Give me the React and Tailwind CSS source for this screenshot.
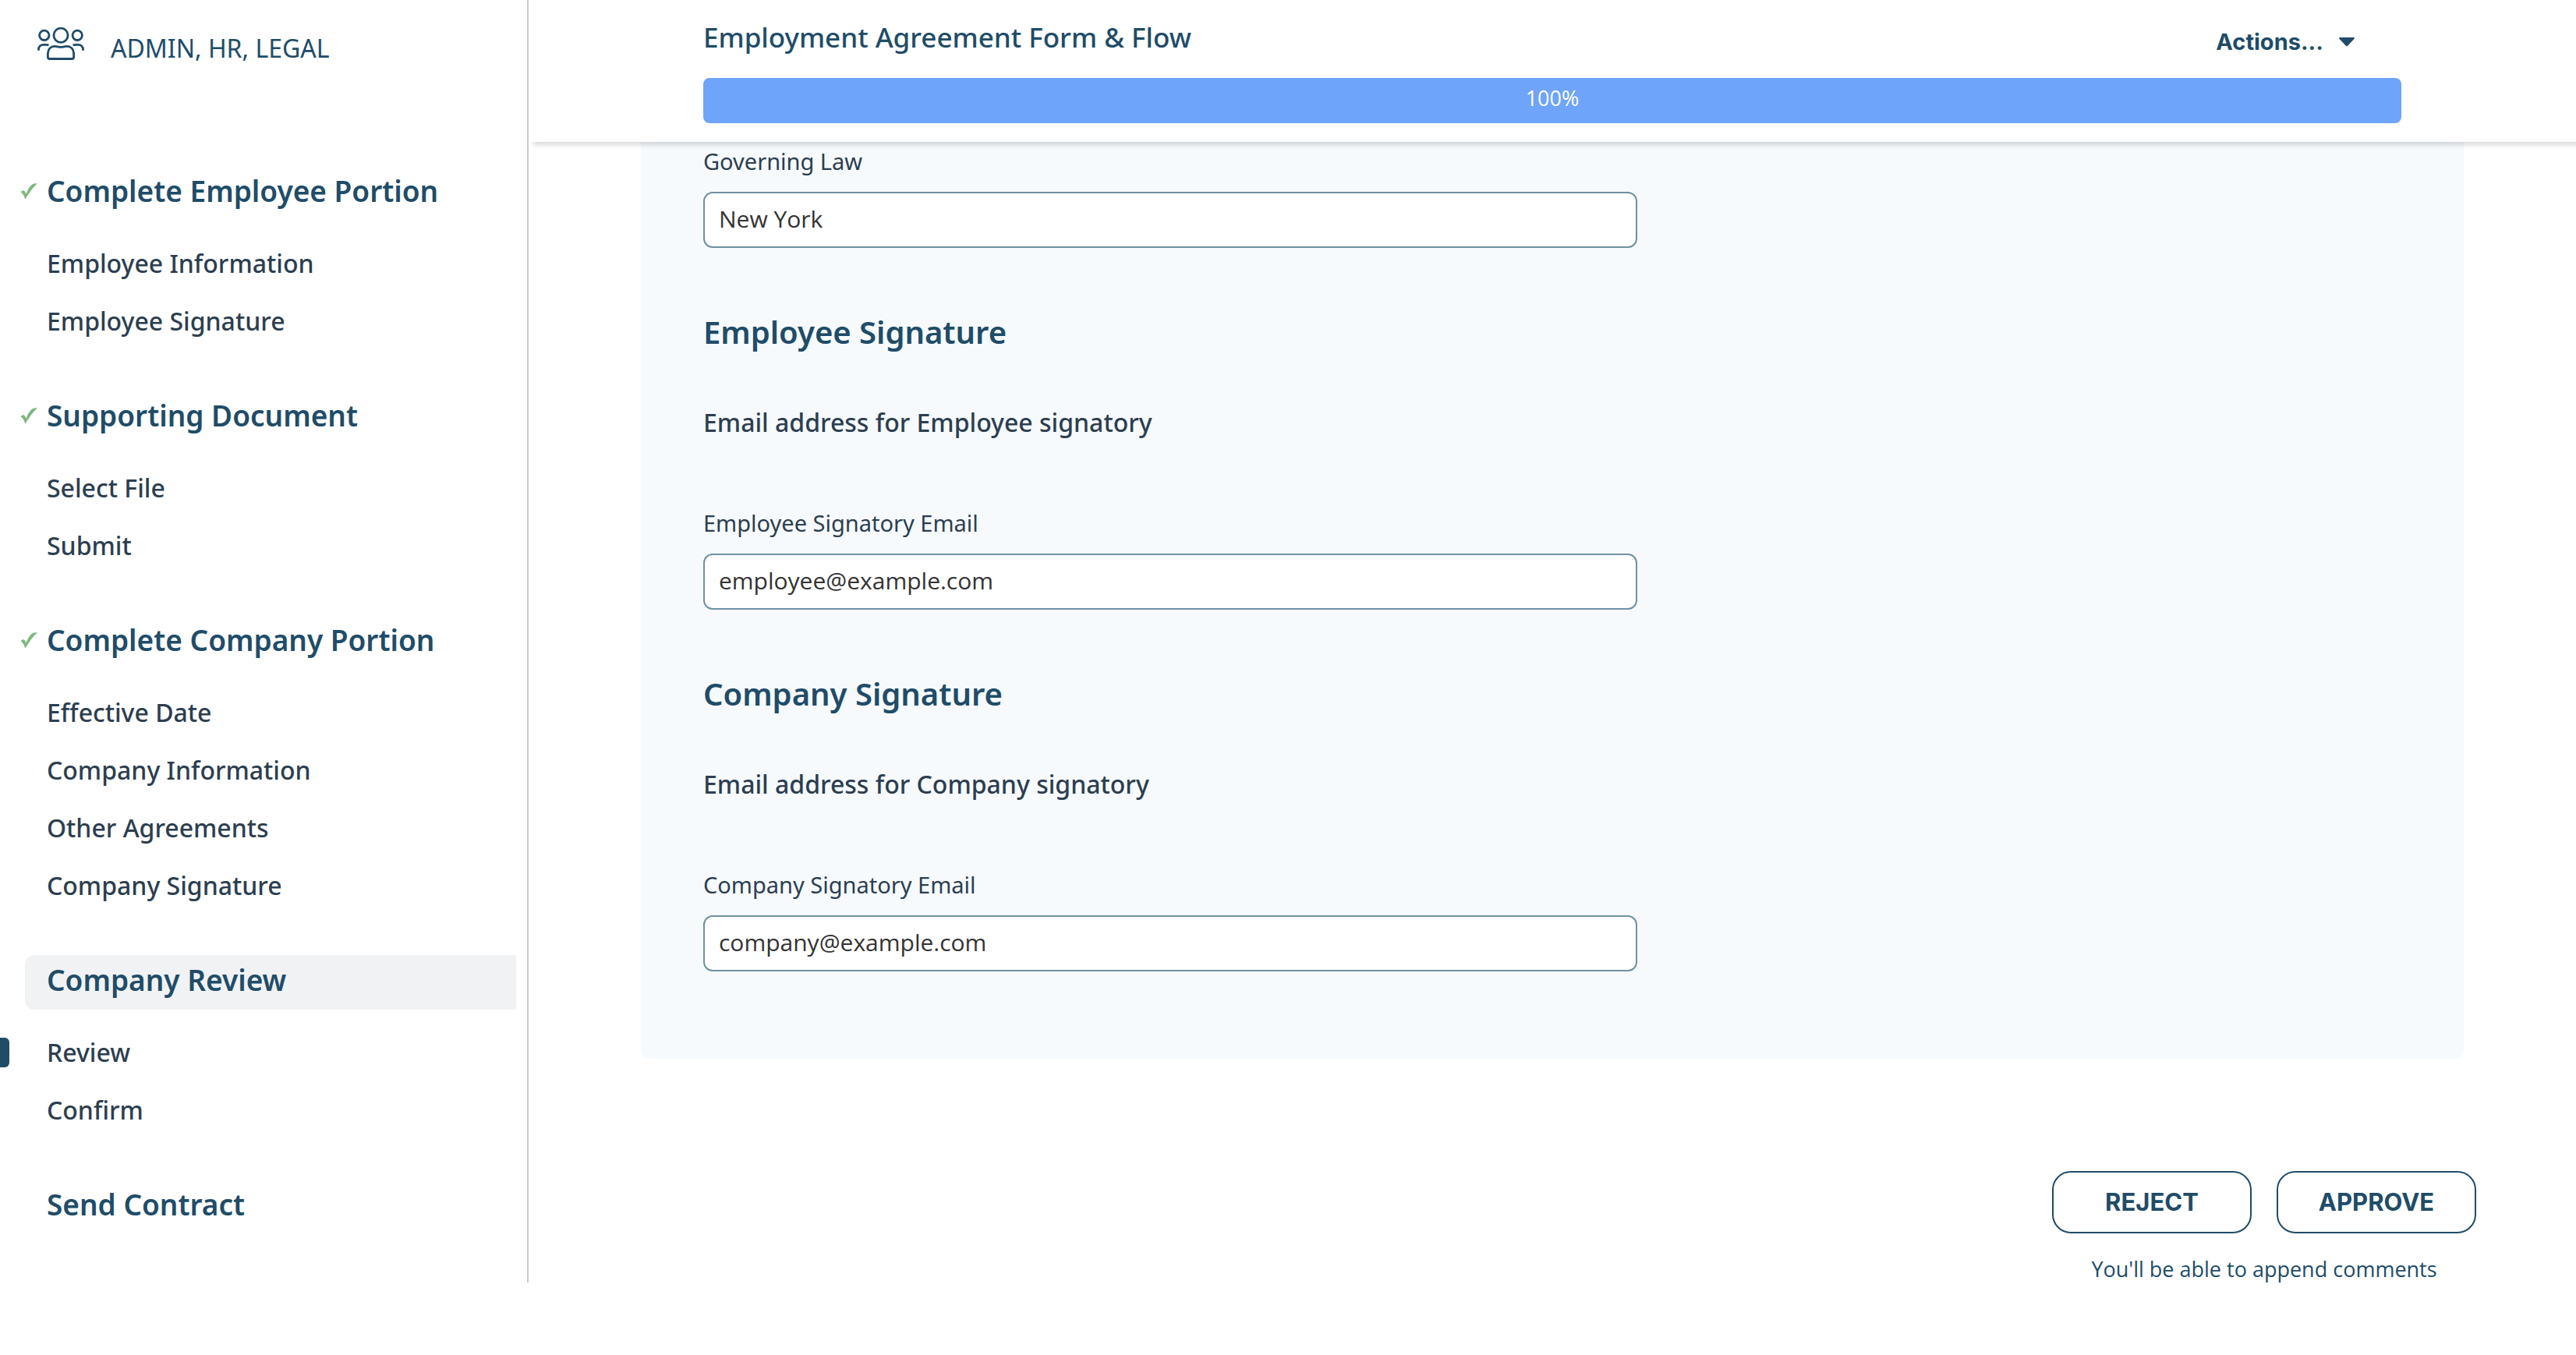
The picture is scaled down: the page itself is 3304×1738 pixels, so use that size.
import React from "react";

const sections = [
  { title: "Complete Employee Portion", done: true, items: ["Employee Information", "Employee Signature"] },
  { title: "Supporting Document", done: true, items: ["Select File", "Submit"] },
  {
    title: "Complete Company Portion",
    done: true,
    items: ["Effective Date", "Company Information", "Other Agreements", "Company Signature"],
  },
  { title: "Company Review", active: true, items: ["Review", "Confirm"], current: "Review" },
  { title: "Send Contract", items: [] },
];

function PeopleIcon() {
  return (
    <svg className="h-[42px] w-[60px] shrink-0" viewBox="0 0 60 42" fill="none" stroke="currentColor" strokeWidth="2.8" aria-hidden="true">
      <circle cx="30" cy="10.3" r="9.1" />
      <circle cx="8.8" cy="10.3" r="6.2" />
      <circle cx="51.2" cy="10.3" r="6.2" />
      <path d="M15.6 40.5a2.2 2.2 0 0 1-2.2-2.2V33.6c0-5.6 3.6-9.2 8.6-9.2 2.6 0 5 1 8 1s5.4-1 8-1c5 0 8.6 3.6 8.6 9.2v4.7a2.2 2.2 0 0 1-2.2 2.2z" />
      <path d="M1.4 29.8v-.8c0-4.400 2.8-6.6 6.600-6.600 1.800 0 3.800-.4 6.500.4" />
      <path d="M58.6 29.8v-.8c0-4.400-2.8-6.600-6.600-6.600-1.800 0-3.800-.4-6.500.4" />
    </svg>
  );
}

function CheckIcon() {
  return (
    <svg className="absolute top-[22px] -left-[6px] h-[21px] w-[22px]" viewBox="0 0 22 21" role="img" aria-label="Done">
      <path fill="#7eb97d" d="M.3 11 4 8.9Q6.4 10.2 7.4 13.6 11 4.500 15.6 1.3 18 .1 22 .3 13.2 8.500 6.4 20.8 4.2 13.4.3 11z" />
    </svg>
  );
}

function Section({ title, done, active, items, current }) {
  return (
    <section>
      <h2
        className={
          "relative mr-3.5 ml-8 rounded-l-xl pb-1.5 pl-7 text-[37px] leading-[64px] font-semibold text-[#204c68] " +
          (active ? "bg-[#f1f2f4]" : "")
        }
      >
        {done && <CheckIcon />}
        {title}
      </h2>
      {items.length > 0 && (
        <ul className="mt-[18px] mb-[52px]">
          {items.map((item) => (
            <li key={item} className="flex items-center">
              <span className={"h-[38px] w-3 rounded-r-md " + (item === current ? "bg-[#204c68]" : "")} />
              <a href="#" className="pl-12 text-[32px] leading-[74px] font-medium text-[#2c3e50]">
                {item}
              </a>
            </li>
          ))}
        </ul>
      )}
    </section>
  );
}

function Field({ id, label, value, type = "text" }) {
  return (
    <div className="flex flex-col gap-[18px]">
      <label htmlFor={id} className="text-[29px] leading-[42px] text-[#2c3e50]">
        {label}
      </label>
      <input
        id={id}
        type={type}
        defaultValue={value}
        className="h-[72px] w-[55%] rounded-xl border-2 border-[#6f91a2] bg-white px-[18px] pb-1 font-['Open_Sans',sans-serif] text-[30px] text-[#333333] outline-none"
      />
    </div>
  );
}

function SignatureBlock({ id, title, text, label, value }) {
  return (
    <section className="pt-20">
      <h3 className="text-[40px] leading-[56px] font-semibold text-[#204c68]">{title}</h3>
      <p className="mt-16 mb-[84px] text-[32px] leading-[48px] font-medium text-[#2c3e50]">{text}</p>
      <Field id={id} label={label} value={value} type="email" />
    </section>
  );
}

function ReviewButton({ children }) {
  return (
    <button
      type="button"
      className="h-20 w-64 rounded-3xl border-2 border-[#204c68] bg-white font-['Inter',sans-serif] text-[31px] font-bold text-[#204c68]"
    >
      {children}
    </button>
  );
}

export default function App() {
  return (
    <div className="flex min-h-screen items-start overflow-clip bg-white font-['Noto_Sans',sans-serif]">
      <aside className="w-[678px] shrink-0 border-r-2 border-[#c9c9c9] pt-[35px] pb-[62px]">
        <div className="flex items-start gap-[34px] pl-12 text-[#204c68]">
          <PeopleIcon />
          <span className="text-[32px] leading-[54px]">ADMIN, HR, LEGAL</span>
        </div>
        <nav className="pt-[124px]" aria-label="Steps">
          {sections.map((s) => (
            <Section key={s.title} {...s} />
          ))}
        </nav>
      </aside>

      <div className="min-w-0 flex-1">
        <header className="relative z-10 bg-white px-56 pt-6 pb-6 shadow-[6px_4px_6px_rgba(0,0,0,0.15)]">
          <div className="flex h-[54px] justify-between">
            <h1 className="text-[35px] leading-[48px] font-medium text-[#204c68]">Employment Agreement Form &amp; Flow</h1>
            <button
              type="button"
              aria-haspopup="menu"
              className="mr-[60px] flex items-center gap-5 self-end font-['Inter',sans-serif] text-[29px] leading-[48px] font-bold text-[#204c68]"
            >
              Actions...
              <svg className="h-3 w-5" viewBox="0 0 20 12" aria-hidden="true">
                <path fill="currentColor" d="M1.2 0h17.6c1 0 1.500 1 .8 1.800l-8.500 9c-.6.7-1.6.7-2.200 0l-8.500-9C-.3 1 .2 0 1.2 0z" />
              </svg>
            </button>
          </div>
          <div
            role="progressbar"
            aria-label="Progress"
            aria-valuenow={100}
            aria-valuemin={0}
            aria-valuemax={100}
            className="mt-[22px] h-[58px] rounded-lg bg-[#6ea4f9] text-center font-['Open_Sans',sans-serif] text-[27px] leading-[52px] text-white"
          >
            100%
          </div>
        </header>

        <main>
          <form className="mx-36 rounded-b-xl bg-[#f6fafd] px-20 pt-1 pb-28">
            <Field id="governing-law" label="Governing Law" value="New York" />
            <SignatureBlock
              id="employee-email"
              title="Employee Signature"
              text="Email address for Employee signatory"
              label="Employee Signatory Email"
              value="employee@example.com"
            />
            <SignatureBlock
              id="company-email"
              title="Company Signature"
              text="Email address for Company signatory"
              label="Company Signatory Email"
              value="company@example.com"
            />
          </form>
          <div className="mt-36 mr-32 flex flex-col items-end">
            <div className="flex flex-col items-center gap-[26px]">
              <div className="flex gap-8">
                <ReviewButton>REJECT</ReviewButton>
                <ReviewButton>APPROVE</ReviewButton>
              </div>
              <p className="font-['Open_Sans',sans-serif] text-[27px] leading-10 text-[#204c68]">
                You'll be able to append comments
              </p>
            </div>
          </div>
        </main>
      </div>
    </div>
  );
}
